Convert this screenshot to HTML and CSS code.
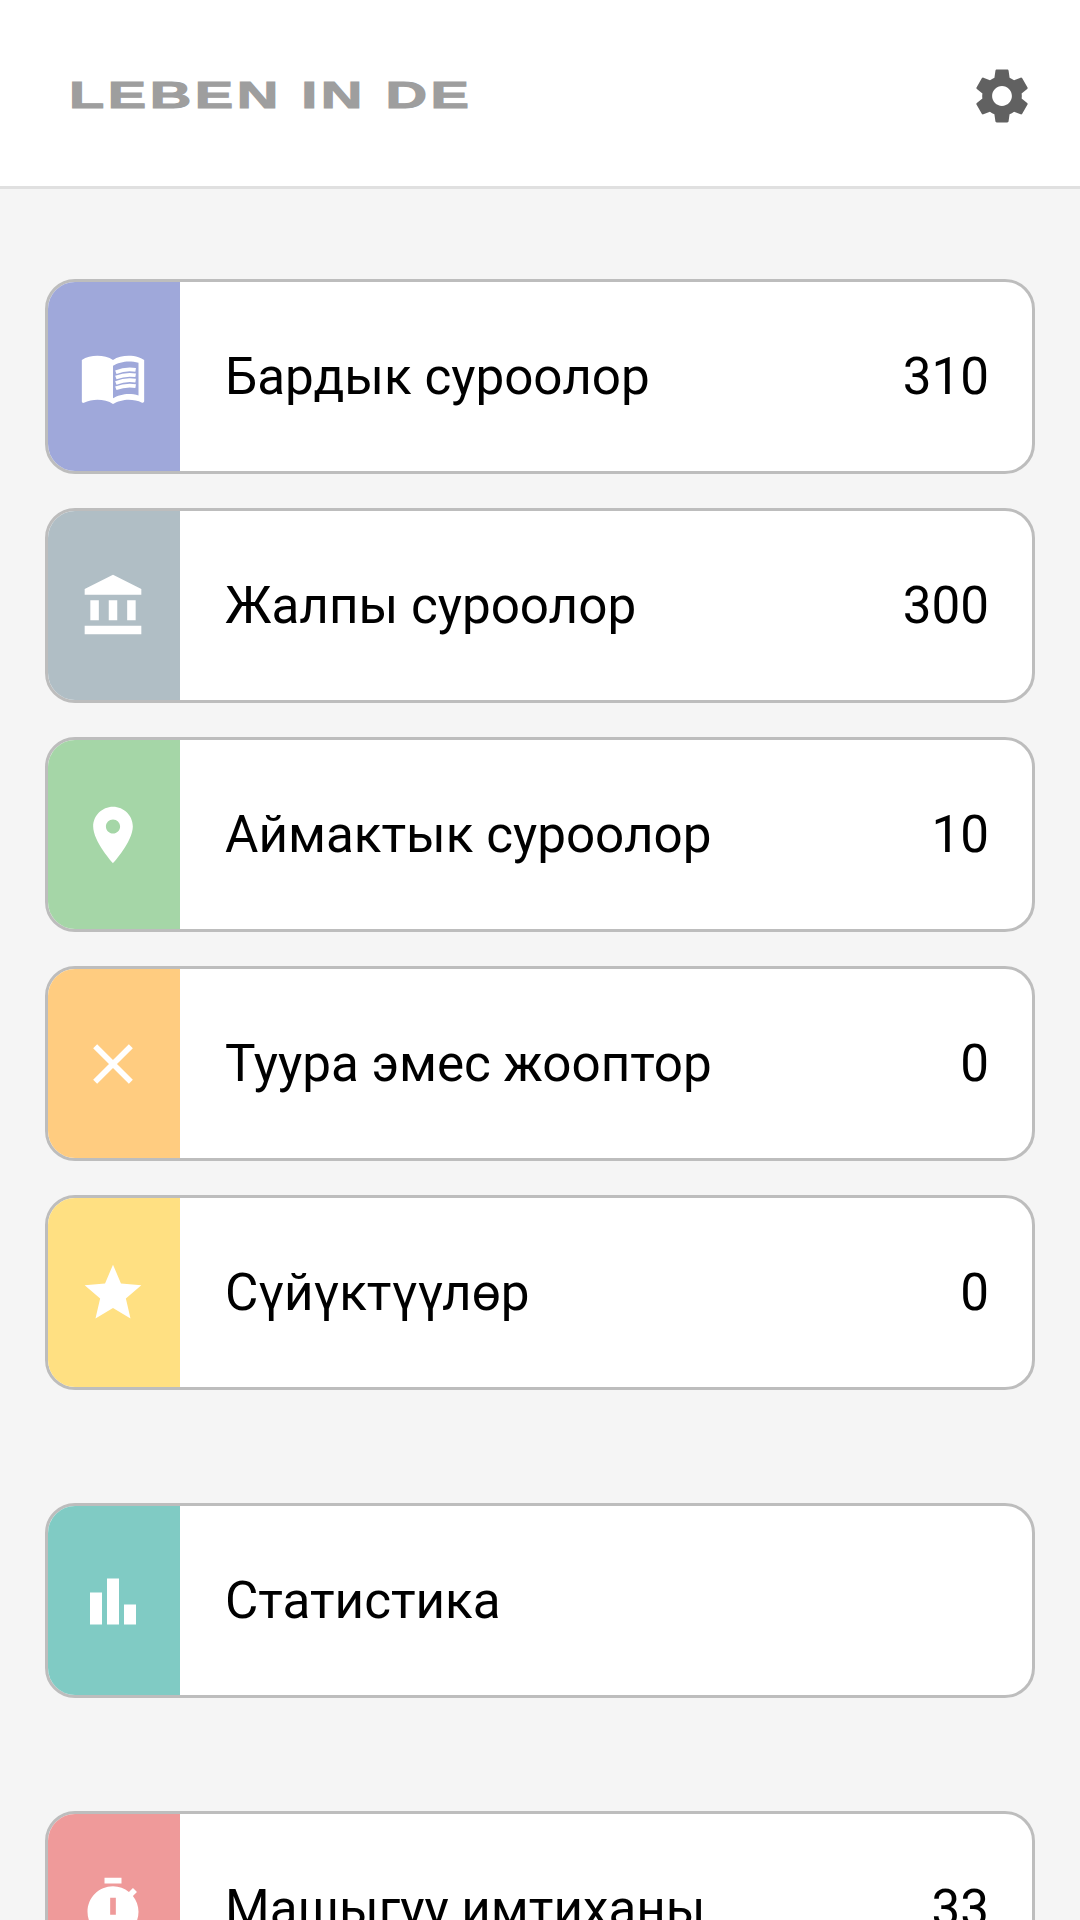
FILE: index.html
```html
<!DOCTYPE html>
<html>
<head>
  <meta charset="UTF-8">
  <title>Leben in DE</title>
  <link rel="stylesheet" href="styles.css">
</head>
<body>
  <div id="container">
    <div id="header">
      <div id="logo">LEBEN IN DE</div>
      <svg class="gear" viewBox="0 0 24 24"><path d="M19.14 12.94c.04-.3.06-.61.06-.94 0-.32-.02-.64-.07-.94l2.03-1.58c.18-.14.23-.41.12-.61l-1.92-3.32c-.12-.22-.37-.29-.59-.22l-2.39.96c-.5-.38-1.03-.7-1.62-.94l-.36-2.54c-.04-.24-.24-.41-.48-.41h-3.84c-.24 0-.43.17-.47.41l-.36 2.54c-.59.24-1.13.57-1.62.94l-2.39-.96c-.22-.08-.47 0-.59.22L2.74 8.87c-.12.21-.08.47.12.61l2.03 1.58c-.05.3-.09.63-.09.94s.02.64.07.94l-2.03 1.58c-.18.14-.23.41-.12.61l1.92 3.32c.12.22.37.29.59.22l2.39-.96c.5.38 1.03.7 1.62.94l.36 2.54c.05.24.24.41.48.41h3.84c.24 0 .44-.17.47-.41l.36-2.54c.59-.24 1.13-.56 1.62-.94l2.39.96c.22.08.47 0 .59-.22l1.92-3.32c.12-.22.07-.47-.12-.61l-2.01-1.58zM12 15.6c-1.98 0-3.6-1.62-3.6-3.6s1.62-3.6 3.6-3.6 3.6 1.62 3.6 3.6-1.62 3.6-3.6 3.6z"/></svg>
    </div>

    <div id="content">
      <div class="group">
        <div class="card">
          <div class="swatch indigo">
            <svg class="icon" viewBox="0 0 24 24"><path d="M21 5c-1.11-.35-2.33-.5-3.5-.5-1.95 0-4.05.4-5.5 1.5-1.45-1.1-3.55-1.5-5.5-1.5S2.45 4.9 1 6v14.65c0 .25.25.5.5.5.1 0 .15-.05.25-.05C3.1 20.45 5.05 20 6.5 20c1.95 0 4.05.4 5.5 1.5 1.35-.85 3.8-1.5 5.5-1.5 1.65 0 3.35.3 4.75 1.05.1.05.15.05.25.05.25 0 .5-.25.5-.5V6c-.6-.45-1.25-.75-2-1zm0 13.5c-1.1-.35-2.3-.5-3.5-.5-1.7 0-4.15.65-5.5 1.5V8c1.35-.85 3.8-1.5 5.5-1.5 1.2 0 2.4.15 3.5.5v11.5z"/><path class="stripes" d="M13 10.3q3.5-1.4 7-.8M13 12.2q3.5-1.4 7-.8M13 14.1q3.5-1.4 7-.8M13 16q3.5-1.4 7-.8"/></svg>
          </div>
          <div class="label">Бардык суроолор</div>
          <div class="count">310</div>
        </div>
        <div class="card">
          <div class="swatch slate">
            <svg class="icon" viewBox="0 0 24 24"><path d="M4 10h3v7H4zM10.5 10h3v7h-3zM2 19h20v3H2zM17 10h3v7h-3zM12 1L2 6v2h20V6z"/></svg>
          </div>
          <div class="label">Жалпы суроолор</div>
          <div class="count">300</div>
        </div>
        <div class="card">
          <div class="swatch green">
            <svg class="icon" viewBox="0 0 24 24"><path d="M12 2C8.13 2 5 5.13 5 9c0 5.25 7 13 7 13s7-7.75 7-13c0-3.87-3.13-7-7-7zm0 9.5c-1.38 0-2.5-1.12-2.5-2.5s1.12-2.5 2.5-2.5 2.5 1.12 2.5 2.5-1.12 2.5-2.5 2.5z"/></svg>
          </div>
          <div class="label">Аймактык суроолор</div>
          <div class="count">10</div>
        </div>
        <div class="card">
          <div class="swatch orange">
            <svg class="icon" viewBox="0 0 24 24"><path d="M19 6.41L17.59 5 12 10.59 6.41 5 5 6.41 10.59 12 5 17.59 6.41 19 12 13.41 17.59 19 19 17.59 13.41 12z"/></svg>
          </div>
          <div class="label">Туура эмес жооптор</div>
          <div class="count">0</div>
        </div>
        <div class="card">
          <div class="swatch amber">
            <svg class="icon" viewBox="0 0 24 24"><path d="M12 17.27L18.18 21l-1.64-7.03L22 9.24l-7.19-.61L12 2 9.19 8.63 2 9.24l5.46 4.73L5.82 21z"/></svg>
          </div>
          <div class="label">Сүйүктүүлөр</div>
          <div class="count">0</div>
        </div>
      </div>

      <div class="group">
        <div class="card">
          <div class="swatch teal">
            <svg class="icon" viewBox="0 0 68 68"><path d="M11 25.5h12v32H11zM28 11.5h12v46H28zM45 37.5h12v20H45z"/></svg>
          </div>
          <div class="label">Статистика</div>
        </div>
      </div>

      <div class="group">
        <div class="card">
          <div class="swatch red">
            <svg class="icon" viewBox="0 0 24 24"><path fill-rule="evenodd" d="M15 1H9v2h6V1zm4.03 6.39l1.42-1.42c-.43-.51-.9-.99-1.41-1.41l-1.42 1.42C16.07 4.74 14.12 4 12 4c-4.97 0-9 4.03-9 9s4.02 9 9 9 9-4.03 9-9c0-2.12-.74-4.07-1.97-5.61zM11 8h2v6h-2V8z"/></svg>
          </div>
          <div class="label">Машыгуу имтиханы</div>
          <div class="count">33</div>
        </div>
      </div>
    </div>
  </div>
</body>
</html>
```

FILE: styles.css
```css
body, html {
  margin: 0;
  padding: 0;
  height: 100%;
  overflow: hidden;
}

#container {
  height: 1920px;
  display: flex;
  flex-direction: column;
  background-color: #f5f5f5;
  font-family: Roboto, sans-serif;
  overflow: hidden;
}

#header {
  flex-shrink: 0;
  height: 189px;
  box-sizing: border-box;
  background-color: white;
  border-bottom: 3px solid #e0e0e0;
  padding: 6px 45px 0 69px;
  display: flex;
  justify-content: space-between;
  align-items: center;
}

#logo {
  font-family: "Liberation Sans", sans-serif;
  font-weight: bold;
  font-size: 36px;
  line-height: 36px;
  letter-spacing: 2.2px;
  color: #9e9e9e;
  white-space: nowrap;
  -webkit-text-stroke: 1px #9e9e9e;
  transform: scaleX(1.6);
  transform-origin: left center;
}

.gear {
  width: 66px;
  height: 66px;
  fill: #616161;
}

#content {
  padding: 90px 45px 0;
  display: flex;
  flex-direction: column;
  gap: 113px;
}

.group {
  display: flex;
  flex-direction: column;
  gap: 34px;
}

.card {
  flex-shrink: 0;
  height: 195px;
  box-sizing: border-box;
  display: flex;
  align-items: center;
  background-color: white;
  border: 3px solid #bdbdbd;
  border-radius: 30px;
  overflow: hidden;
}

.swatch {
  align-self: stretch;
  width: 132px;
  box-sizing: border-box;
  padding-right: 2px;
  display: flex;
  align-items: center;
  justify-content: center;
}

.indigo { background-color: #9fa8da; }
.slate { background-color: #b0bec5; }
.green { background-color: #a5d6a7; }
.orange { background-color: #ffcc80; }
.amber { background-color: #ffe082; }
.teal { background-color: #80cbc4; }
.red { background-color: #ef9a9a; }

.icon {
  width: 68px;
  height: 68px;
  fill: white;
}

.stripes {
  fill: none;
  stroke: white;
  stroke-width: 1.3;
}

.label {
  flex-grow: 1;
  margin-left: 45px;
  font-size: 51.2px;
  color: black;
}

.count {
  margin-right: 43px;
  font-size: 51.2px;
  color: black;
}
```
